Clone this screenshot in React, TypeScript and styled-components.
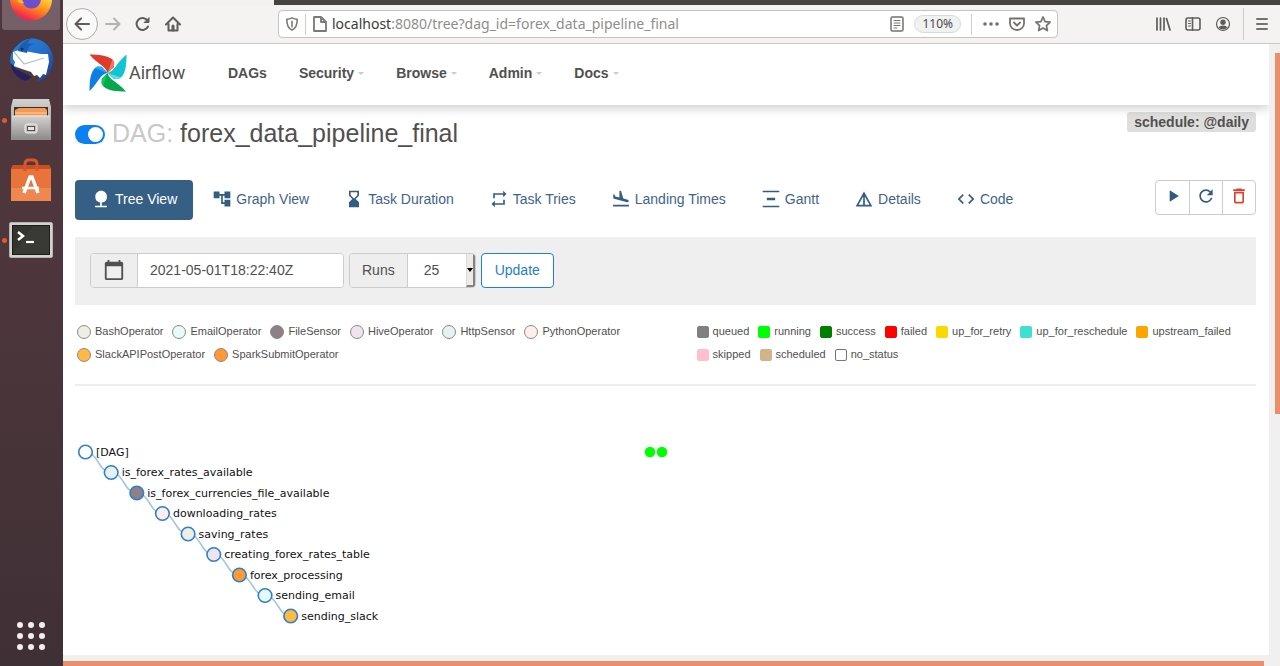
import React from 'react';
import styled, { createGlobalStyle, css } from 'styled-components';
import {
  MdNature, MdAccountTree, MdHourglassBottom, MdRepeat, MdFlightLand, MdVerticalDistribute,
  MdDetails, MdCode, MdPlayArrow, MdRefresh, MdDeleteOutline, MdCalendarToday,
} from 'react-icons/md';

const GlobalStyle = createGlobalStyle`
  *, *::before, *::after { box-sizing: border-box; }
  body {
    margin: 0;
    color: #51504f;
    font-family: "Liberation Sans", Arial, sans-serif;
    font-size: 14px;
    line-height: 20px;
  }
  button, input, select { font: inherit; color: inherit; margin: 0; }
  a { text-decoration: none; }
`;

const Desktop = styled.div`
  display: grid;
  grid-template-columns: 63px minmax(0, 1fr);
  min-height: 100vh;
`;

/* Launcher */

const Dock = styled.nav`
  display: flex;
  flex-direction: column;
  align-items: stretch;
  padding-right: 1px;
  background: linear-gradient(#50373e, #4c363b 45%, #3f3035);
`;

const DockButton = styled.button<{ $running?: boolean; $active?: boolean }>`
  display: flex;
  justify-content: center;
  align-items: center;
  position: relative;
  height: 60px;
  padding: 0;
  border: 0;
  background: none;
  ${p => p.$active && css`
    height: 30px;
    margin: 0 2px;
    align-items: flex-start;
    border-radius: 0 0 3px 3px;
    background: #75606a;
  `}
  ${p => p.$running && css`
    &::before {
      content: '';
      position: absolute;
      left: 2px;
      top: 50%;
      width: 5px;
      height: 5px;
      margin-top: -2px;
      border-radius: 50%;
      background: #e2582d;
    }
  `}
`;

const DockSpacer = styled.div`
  flex: 1;
`;

/* Browser chrome */

const Browser = styled.div`
  display: flex;
  flex-direction: column;
  min-width: 0;
  background: #f2f1ef;
`;

const TabStrip = styled.div`
  display: flex;
  height: 5px;
  background: #464440;
`;

const ActiveTab = styled.div`
  width: 211px;
  background: #f2f1f0;
`;

const BrowserBar = styled.div`
  display: flex;
  align-items: center;
  height: 39px;
  padding: 0 5px 0 3px;
  border-bottom: 1px solid #cbc9c7;
  background: #f4f3f2;
`;

const ToolButton = styled.button<{ $round?: boolean }>`
  display: flex;
  flex: none;
  align-items: center;
  justify-content: center;
  width: 30px;
  height: 30px;
  padding: 0;
  border: 0;
  border-radius: 50%;
  background: none;
  color: #5f5d59;
  &:disabled { color: #b4b2b0; }
  ${p => p.$round && css`
    width: 32px;
    height: 32px;
    border: 1px solid #aeaca9;
    background: #fbfafa;
  `}
`;

const AddressBar = styled.div`
  display: flex;
  align-items: center;
  flex: 1;
  min-width: 0;
  height: 28px;
  margin: 0 90px;
  padding: 0 1px 0 6px;
  border: 1px solid #c6c4c2;
  border-radius: 4px;
  background: #fff;
  color: #7b7976;
`;

const Address = styled.div`
  flex: 1;
  min-width: 0;
  padding-left: 4px;
  overflow: hidden;
  white-space: nowrap;
  font-family: "Noto Sans", sans-serif;
  color: #8f8e8c;
  b { font-weight: 400; color: #3a3938; }
`;

const BarDivider = styled.span<{ $tall?: boolean }>`
  flex: none;
  width: 1px;
  height: ${p => (p.$tall ? 32 : 21)}px;
  margin: 0 ${p => (p.$tall ? 5 : 6)}px;
  background: #cfcdcb;
`;

const Zoom = styled.button`
  height: 18px;
  margin: 0 4px;
  padding: 0 7px;
  border: 1px solid #d8dadb;
  border-radius: 9px;
  background: #f0f2f2;
  font-family: "Noto Sans", sans-serif;
  font-size: 12px;
  line-height: 16px;
  color: #4a4948;
`;

const SmallButton = styled.button`
  display: flex;
  flex: none;
  align-items: center;
  justify-content: center;
  width: 26px;
  height: 26px;
  padding: 0;
  border: 0;
  background: none;
  color: #74726f;
`;

const Viewport = styled.div`
  display: flex;
  flex: 1;
`;

const Page = styled.div`
  flex: 1;
  min-width: 0;
  background: #fff;
`;

const VerticalTrack = styled.div`
  display: flex;
  justify-content: flex-end;
  width: 11px;
  padding-top: 9px;
  background: #f2f0ee;
`;

const VerticalThumb = styled.div`
  width: 5px;
  height: 60%;
  background: #ea8e6b;
`;

const HorizontalTrack = styled.div`
  display: flex;
  align-items: flex-end;
  height: 11px;
  padding-right: 16px;
  background: #f2f0ee;
`;

const HorizontalThumb = styled.div`
  flex: 1;
  height: 5px;
  background: #ea8e6b;
`;

/* Airflow page */

const Navbar = styled.header`
  display: flex;
  align-items: center;
  height: 61px;
  padding: 0 0 3px 26px;
  background: #fff;
  box-shadow: 0 3px 10px rgba(0, 0, 0, 0.2);
  clip-path: inset(0 0 -16px 0);
`;

const Brand = styled.a`
  display: flex;
  align-items: center;
  gap: 2px;
  width: 123px;
  color: #51504f;
  font-family: Roboto, sans-serif;
  font-size: 18px;
`;

const NavLink = styled.a`
  display: flex;
  align-items: center;
  gap: 4px;
  padding: 0 16px;
  color: #51504f;
  font-weight: 700;
`;

const Caret = styled.span`
  border: 3px solid transparent;
  border-top-color: #ccc;
  border-bottom: 0;
`;

const Main = styled.main`
  padding: 7px 13px 0 12px;
`;

const TitleRow = styled.div`
  display: flex;
  align-items: flex-start;
  justify-content: space-between;
`;

const Title = styled.h3`
  display: flex;
  align-items: center;
  gap: 7px;
  margin: 6px 0 0;
  font-size: 25px;
  font-weight: 400;
  line-height: 30px;
`;

const Muted = styled.span`
  color: #c9c8c7;
`;

const Toggle = styled.input`
  appearance: none;
  display: flex;
  width: 30px;
  height: 19px;
  margin: 3px 0 0;
  padding: 2px;
  border-radius: 10px;
  background: #0c7ff2;
  &::before {
    content: '';
    width: 15px;
    height: 15px;
    margin-left: auto;
    border-radius: 50%;
    background: #fff;
  }
`;

const Schedule = styled.a`
  padding: 0 7px;
  border-radius: 3px;
  background: #dededd;
  color: #51504f;
  font-weight: 700;
`;

const ViewRow = styled.div`
  display: flex;
  align-items: flex-start;
  justify-content: space-between;
  margin-top: 32px;
`;

const Views = styled.nav`
  display: flex;
  gap: 3px;
`;

const ViewLink = styled.a<{ $active?: boolean }>`
  display: flex;
  align-items: center;
  gap: 4px;
  height: 40px;
  padding: 0 16px 2px;
  border-radius: 4px;
  white-space: nowrap;
  color: ${p => (p.$active ? '#fff' : '#3f648a')};
  background: ${p => (p.$active ? '#355f85' : 'none')};
  svg { width: 20px; height: 20px; color: ${p => (p.$active ? '#fff' : '#345d82')}; }
`;

const Actions = styled.div`
  display: flex;
  border: 1px solid #ccc;
  border-radius: 4px;
`;

const ActionButton = styled.button<{ $danger?: boolean }>`
  display: flex;
  justify-content: center;
  width: 33px;
  height: 33px;
  padding: 5px 0 0;
  border: 0;
  background: none;
  color: ${p => (p.$danger ? '#e0402f' : '#315b80')};
  & + & { border-left: 1px solid #ccc; }
`;

const FilterForm = styled.form`
  display: flex;
  gap: 5px;
  margin-top: 17px;
  padding: 16px 15px 17px;
  background: #efefef;
`;

const InputGroup = styled.div`
  display: flex;
  height: 35px;
  border: 1px solid #ccc;
  border-radius: 4px;
  background: #fff;
  overflow: hidden;
`;

const Addon = styled.label`
  display: flex;
  align-items: center;
  justify-content: center;
  padding: 0 12px 1px;
  border-right: 1px solid #ccc;
  background: #eee;
`;

const DateInput = styled.input`
  width: 205px;
  padding: 0 12px 1px;
  border: 0;
  background: #fff;
`;

const RunsSelect = styled.select`
  appearance: none;
  width: 58px;
  padding: 0 16px 1px;
  border: 0;
  background: #fff;
`;

const SelectArrow = styled.span`
  display: flex;
  align-items: center;
  justify-content: center;
  width: 9px;
  border-right: 2px solid #858380;
  border-bottom: 2px solid #858380;
  border-left: 1px solid #dcdad8;
  background: #ecebea;
  &::before {
    content: '';
    border: 3px solid transparent;
    border-top: 4px solid #000;
    border-bottom: 0;
  }
`;

const UpdateButton = styled.button`
  height: 35px;
  padding: 0 13px 1px;
  border: 1px solid #1f7fd0;
  border-radius: 4px;
  background: #fff;
  color: #1f7fc4;
`;

const Legends = styled.div`
  display: grid;
  grid-template-columns: 10fr 9fr;
  padding: 15px 0 18px;
  border-bottom: 2px solid #eee;
`;

const Legend = styled.ul<{ $dense?: boolean }>`
  display: flex;
  flex-wrap: wrap;
  align-content: flex-start;
  gap: 0 ${p => (p.$dense ? 9 : 9)}px;
  margin: 0;
  padding: ${p => (p.$dense ? '0' : '0 60px 0 2px')};
  list-style: none;
  font-size: 11px;
  line-height: 23px;
`;

const LegendItem = styled.li`
  display: flex;
  align-items: center;
  gap: 4px;
`;

const OperatorSwatch = styled.span<{ $color: string }>`
  width: 14px;
  height: 14px;
  border: 1px solid #8b898a;
  border-radius: 50%;
  background: ${p => p.$color};
`;

const StateSwatch = styled.span<{ $color: string; $outlined?: boolean }>`
  width: 12px;
  height: 12px;
  border: 1px solid ${p => (p.$outlined ? '#777' : p.$color)};
  border-radius: 2px;
  background: ${p => p.$color};
`;

const TreeChart = styled.svg`
  display: block;
  width: 100%;
  height: 268px;
  font-family: "DejaVu Sans", sans-serif;
  font-size: 11px;
`;

/* Icons */

type LineIconProps = { size?: number; width?: number; children: React.ReactNode };

const LineIcon = ({ size = 16, width = 2, children }: LineIconProps) => (
  <svg width={size} height={size} viewBox="0 0 16 16" fill="none" stroke="currentColor"
    strokeWidth={width} strokeLinecap="round" strokeLinejoin="round" aria-hidden="true">
    {children}
  </svg>
);

const FirefoxIcon = () => (
  <svg width="46" height="22" viewBox="0 0 46 22" aria-hidden="true">
    <defs>
      <linearGradient id="fx" x1="1" y1="0" x2="0.1" y2="1">
        <stop offset="0" stopColor="#ffd43c" />
        <stop offset="0.4" stopColor="#ff8a1c" />
        <stop offset="0.8" stopColor="#f4264f" />
      </linearGradient>
    </defs>
    <path d="M2 0c1 12 10 20.500 21 20.500S43.500 12 44 0z" fill="url(#fx)" />
    <path d="M14 0c1 5 4.500 8.500 9.500 8.500S32 5 33 0z" fill="#6b4fd0" />
    <path d="M9 0c1 3 4 4 7 3l-2-3z" fill="#ffb52a" />
  </svg>
);

const ThunderbirdIcon = () => (
  <svg width="46" height="46" viewBox="0 0 46 46" aria-hidden="true">
    <defs>
      <linearGradient id="tb" x1="0" y1="0" x2="1" y2="1">
        <stop offset="0" stopColor="#2387d8" />
        <stop offset="0.5" stopColor="#256fca" />
        <stop offset="1" stopColor="#163a86" />
      </linearGradient>
    </defs>
    <path d="M10 8C16 1 25 0 32 3c9 4 14 13 13 22-1 10-8 18-17 20 4-4 6-7 6-11L4 30C0 22 3 14 10 8z" fill="url(#tb)" />
    <path d="M3 26c0 8 6 16 15 18l6-4-16-8z" fill="#25205e" />
    <path d="M5 15l6-2 22 4 7 0 1 8-3 13-3-1-3 4-3-3-3 1-3-4-9-3-8-3 1-4-2-3z" fill="#fff" />
    <path d="M6 15l10 12 20-6" fill="none" stroke="#b4c0cd" strokeWidth="1.200" />
    <path d="M10 14c1-6 6-11 13-12l-4 4 7 1c-5 1-6 4-7 9z" fill="#1a5fb4" />
    <circle cx="14" cy="12" r="1.500" fill="#0b2f66" />
  </svg>
);

const FilesIcon = () => (
  <svg width="42" height="44" viewBox="0 0 42 44" aria-hidden="true">
    <defs>
      <linearGradient id="fl" x1="0" y1="0" x2="0" y2="1">
        <stop offset="0" stopColor="#d2d1cf" />
        <stop offset="1" stopColor="#8e8d8b" />
      </linearGradient>
    </defs>
    <path d="M3 1h36l2 8v33H1V9z" fill="url(#fl)" />
    <path d="M4 9h34v12H4z" fill="#3b2f28" />
    <path d="M5 12l4-2h26l2 2v9H5z" fill="#f29a58" />
    <path d="M5 15h32M5 18h32" stroke="#ffcfa0" />
    <path d="M2 18h38v23H2z" fill="url(#fl)" />
    <path d="M2 18h38" stroke="#e8e7e5" />
    <rect x="15" y="26" width="12" height="9" rx="2" fill="#c3c2c0" stroke="#f1f0ef" />
    <rect x="17.500" y="28.500" width="7" height="4" fill="#e4e3e1" stroke="#55534f" />
  </svg>
);

const SoftwareIcon = () => (
  <svg width="42" height="44" viewBox="0 0 42 44" aria-hidden="true">
    <path d="M3 7h36l2 4v32H1V11z" fill="#e8743b" />
    <path d="M3 7h36l2 4H1z" fill="#c9501f" />
    <path d="M1 30h40v13H1z" fill="#ee8850" />
    <path d="M15 13V6q0-4 4-4h4q4 0 4 4v7" fill="none" stroke="#d9552b" strokeWidth="3" />
    <path d="M14 35l6-16h2l6 16" fill="none" stroke="#fff" strokeWidth="3.500" />
    <path d="M12 30h17" stroke="#fff" strokeWidth="2.500" />
  </svg>
);

const TerminalIcon = () => (
  <svg width="44" height="36" viewBox="0 0 44 36" aria-hidden="true">
    <rect x="0.500" y="0.500" width="43" height="35" rx="1.500" fill="#d3d2d0" stroke="#b5b3b1" />
    <rect x="3.500" y="3.500" width="37" height="29" fill="#33332f" stroke="#1c1c1b" />
    <path d="M4 32L24 4h16v28z" fill="#3e3e3c" opacity="0.600" />
    <path d="M9 10l5 4-5 4" fill="none" stroke="#fff" strokeWidth="2.500" />
    <path d="M17 20h8" stroke="#fff" strokeWidth="2.200" />
  </svg>
);

const AppsIcon = () => (
  <svg width="30" height="30" viewBox="0 0 30 30" fill="#f3efef" aria-hidden="true">
    {[4, 15, 26].map(y => [4, 15, 26].map(x => <circle key={`${x}-${y}`} cx={x} cy={y} r="3" />))}
  </svg>
);

const AirflowLogo = () => (
  <svg width="38" height="38" viewBox="0 0 38 38" aria-hidden="true">
    <path d="M0.500 0.500C9 0.500 19 1.500 23.500 5.500L25 13l-6.500 6C17 12 9 11 0.500 0.500z" fill="#df3a2b" />
    <path d="M23.500 5.500c3.500 3 2.500 7-5 13.500z" fill="#f4765f" />
    <path d="M37.500 0.500C37.500 9 37 19 32 23.500L25 25l-6.500-6C26 17 27 9 37.500 0.500z" fill="#11c4d4" />
    <path d="M32 23.500c-3 3-7 2-13.500-4.500z" fill="#5fdde2" />
    <path d="M37 37.500c-9 0-18-0.500-23-5.500L12.500 25l6-6C20 26 28 27 37 37.500z" fill="#06a84e" />
    <path d="M14 32c-3-3-2.500-7 4.500-13z" fill="#0ccc5e" />
    <path d="M0.500 37C0.500 28 1 19 6 14l6.500-1.500 6 6.500C11 20 10 28 0.500 37z" fill="#0f7de4" />
    <path d="M6 14c3-3 6.500-2.500 12.500 5z" fill="#1fb3ee" />
  </svg>
);

/* Data */

const menus = ['Security', 'Browse', 'Admin', 'Docs'];

const views = [
  { label: 'Tree View', Icon: MdNature, active: true },
  { label: 'Graph View', Icon: MdAccountTree },
  { label: 'Task Duration', Icon: MdHourglassBottom },
  { label: 'Task Tries', Icon: MdRepeat },
  { label: 'Landing Times', Icon: MdFlightLand },
  { label: 'Gantt', Icon: MdVerticalDistribute },
  { label: 'Details', Icon: MdDetails },
  { label: 'Code', Icon: MdCode },
];

const operators: [string, string][] = [
  ['BashOperator', '#f0ede4'],
  ['EmailOperator', '#e6faf9'],
  ['FileSensor', '#8f7f86'],
  ['HiveOperator', '#f0e4ec'],
  ['HttpSensor', '#e6f1f2'],
  ['PythonOperator', '#ffefeb'],
  ['SlackAPIPostOperator', '#ffba44'],
  ['SparkSubmitOperator', '#ff9933'],
];

const states: [string, string][] = [
  ['queued', '#808080'],
  ['running', '#00ff00'],
  ['success', '#008000'],
  ['failed', '#ff0000'],
  ['up_for_retry', '#ffd700'],
  ['up_for_reschedule', '#40e0d0'],
  ['upstream_failed', '#ffa500'],
  ['skipped', '#ffc0cb'],
  ['scheduled', '#d2b48c'],
  ['no_status', '#ffffff'],
];

const tasks: [string, string][] = [
  ['[DAG]', '#ffffff'],
  ['is_forex_rates_available', '#e6f1f2'],
  ['is_forex_currencies_file_available', '#8f7f86'],
  ['downloading_rates', '#ffefeb'],
  ['saving_rates', '#f0ede4'],
  ['creating_forex_rates_table', '#f0e4ec'],
  ['forex_processing', '#ff9933'],
  ['sending_email', '#e6faf9'],
  ['sending_slack', '#ffba44'],
];

const nodeX = (i: number) => 10.5 + i * 25.65;
const nodeY = (i: number) => 66 + i * 20.5;

const TaskTree = () => (
  <TreeChart role="img" aria-label="DAG task tree">
    {tasks.slice(1).map(([name], i) => {
      const mid = (nodeX(i) + nodeX(i + 1)) / 2;
      return (
        <path
          key={name}
          d={`M${nodeX(i)} ${nodeY(i)}C${mid} ${nodeY(i)} ${mid} ${nodeY(i + 1)} ${nodeX(i + 1)} ${nodeY(i + 1)}`}
          fill="none"
          stroke="#9fc3e0"
          strokeWidth="1.500"
        />
      );
    })}
    {tasks.map(([name, color], i) => (
      <g key={name}>
        <circle cx={nodeX(i)} cy={nodeY(i)} r="6.800" fill={color} stroke="#2d80cc" strokeWidth="1.600" />
        <text x={nodeX(i) + 10.5} y={nodeY(i) + 3.5} fill="#111">{name}</text>
      </g>
    ))}
    <circle cx="575" cy="66" r="5.300" fill="#00ff00" />
    <circle cx="587" cy="66" r="5.300" fill="#00ff00" />
  </TreeChart>
);

export default function App() {
  return (
    <Desktop>
      <GlobalStyle />
      <Dock aria-label="Launcher">
        <DockButton $active aria-label="Firefox"><FirefoxIcon /></DockButton>
        <DockButton aria-label="Thunderbird"><ThunderbirdIcon /></DockButton>
        <DockButton $running aria-label="Files"><FilesIcon /></DockButton>
        <DockButton aria-label="Software"><SoftwareIcon /></DockButton>
        <DockButton $running aria-label="Terminal"><TerminalIcon /></DockButton>
        <DockSpacer />
        <DockButton aria-label="Show applications"><AppsIcon /></DockButton>
      </Dock>
      <Browser>
        <TabStrip><ActiveTab /></TabStrip>
        <BrowserBar>
          <ToolButton $round aria-label="Back">
            <LineIcon><path d="M15 8H2M7 2.500L1.500 8 7 13.500" /></LineIcon>
          </ToolButton>
          <ToolButton aria-label="Forward" disabled>
            <LineIcon><path d="M1 8h13M9 2.500L14.500 8 9 13.500" /></LineIcon>
          </ToolButton>
          <ToolButton aria-label="Reload">
            <LineIcon><path d="M13 10.500A6 6 0 1 1 12.500 4.500" /><path d="M14 2v4.500H9.500z" fill="currentColor" strokeWidth="1" /></LineIcon>
          </ToolButton>
          <ToolButton aria-label="Home">
            <LineIcon><path d="M1 8.500L8 1.500l7 7M3.500 8v6.500h9V8" /><path d="M8 14v-4" strokeWidth="3" /></LineIcon>
          </ToolButton>
          <AddressBar>
            <LineIcon size={14} width={1.8}><path d="M8 1c2 1.200 4 1.500 6 1.500C14 9 12.500 13 8 15 3.500 13 2 9 2 2.500 4 2.500 6 2.200 8 1z" /><path d="M8 5v6" /></LineIcon>
            <BarDivider />
            <LineIcon width={1.8}><path d="M2 1h7l5 5v9H2zM9 1v5h5" /></LineIcon>
            <Address><b>localhost</b>:8080/tree?dag_id=forex_data_pipeline_final</Address>
            <SmallButton aria-label="Reader view">
              <LineIcon width={1.5}><rect x="2" y="1" width="12" height="14" rx="1.500" /><path d="M5 4.500h6M5 7h6M5 9.500h6M5 12h3" strokeWidth="1" /></LineIcon>
            </SmallButton>
            <Zoom>110%</Zoom>
            <BarDivider />
            <SmallButton aria-label="Page actions">
              <LineIcon><g fill="currentColor" stroke="none"><circle cx="2" cy="8" r="1.800" /><circle cx="8" cy="8" r="1.800" /><circle cx="14" cy="8" r="1.800" /></g></LineIcon>
            </SmallButton>
            <SmallButton aria-label="Save to Pocket">
              <LineIcon width={1.8}><path d="M1 2.500h14V7.500a7 6.500 0 0 1-14 0z" /><path d="M5 6.500l3 3 3-3" /></LineIcon>
            </SmallButton>
            <SmallButton aria-label="Bookmark">
              <LineIcon width={1.7}><path d="M8 1l2.100 4.600 5 .6-3.700 3.400 1 5L8 12.100 3.600 14.600l1-5L.9 6.200l5-.6z" /></LineIcon>
            </SmallButton>
          </AddressBar>
          <ToolButton aria-label="Library">
            <LineIcon><path d="M2 2v12M5.500 2v12M9 2v12M11.500 2.500l3.500 11.500" strokeWidth="1.700" /></LineIcon>
          </ToolButton>
          <ToolButton aria-label="Sidebar">
            <LineIcon width={1.6}><rect x="1" y="2" width="14" height="12" rx="2" /><path d="M7.500 2v12" /><path d="M3.500 5h2M3.500 7.500h2M3.500 10h2" strokeWidth="1" /></LineIcon>
          </ToolButton>
          <ToolButton aria-label="Account">
            <LineIcon width={1.2}><circle cx="8" cy="8" r="6.500" /><g fill="currentColor" stroke="none"><circle cx="8" cy="6.300" r="2.700" /><path d="M3.500 11.500q1-2 4.500-2t4.500 2Q10.500 13.500 8 13.500t-4.500-2z" /></g></LineIcon>
          </ToolButton>
          <BarDivider $tall />
          <SmallButton aria-label="Menu">
            <LineIcon><path d="M3 3h10M3 8h10M3 13h10" /></LineIcon>
          </SmallButton>
        </BrowserBar>
        <Viewport>
          <Page>
            <Navbar>
              <Brand href="#"><AirflowLogo />Airflow</Brand>
              <NavLink href="#">DAGs</NavLink>
              {menus.map(name => <NavLink key={name} href="#">{name}<Caret /></NavLink>)}
            </Navbar>
            <Main>
              <TitleRow>
                <Title>
                  <Toggle type="checkbox" defaultChecked aria-label="Pause or unpause DAG" />
                  <span><Muted>DAG:</Muted> forex_data_pipeline_final</span>
                </Title>
                <Schedule href="#">schedule: @daily</Schedule>
              </TitleRow>
              <ViewRow>
                <Views>
                  {views.map(({ label, Icon, active }) => (
                    <ViewLink key={label} href="#" $active={active}><Icon />{label}</ViewLink>
                  ))}
                </Views>
                <Actions>
                  <ActionButton aria-label="Trigger DAG"><MdPlayArrow size={20} /></ActionButton>
                  <ActionButton aria-label="Refresh"><MdRefresh size={20} /></ActionButton>
                  <ActionButton aria-label="Delete DAG" $danger><MdDeleteOutline size={20} /></ActionButton>
                </Actions>
              </ViewRow>
              <FilterForm onSubmit={e => e.preventDefault()}>
                <InputGroup>
                  <Addon htmlFor="base-date" aria-label="Base date"><MdCalendarToday size={22} /></Addon>
                  <DateInput id="base-date" type="text" defaultValue="2021-05-01T18:22:40Z" />
                </InputGroup>
                <InputGroup>
                  <Addon htmlFor="runs">Runs</Addon>
                  <RunsSelect id="runs" defaultValue="25">
                    <option>5</option>
                    <option>25</option>
                    <option>50</option>
                    <option>100</option>
                    <option>365</option>
                  </RunsSelect>
                  <SelectArrow />
                </InputGroup>
                <UpdateButton type="submit">Update</UpdateButton>
              </FilterForm>
              <Legends>
                <Legend>
                  {operators.map(([name, color]) => (
                    <LegendItem key={name}><OperatorSwatch $color={color} />{name}</LegendItem>
                  ))}
                </Legend>
                <Legend $dense>
                  {states.map(([name, color]) => (
                    <LegendItem key={name}><StateSwatch $color={color} $outlined={name === 'no_status'} />{name}</LegendItem>
                  ))}
                </Legend>
              </Legends>
              <TaskTree />
            </Main>
          </Page>
          <VerticalTrack><VerticalThumb /></VerticalTrack>
        </Viewport>
        <HorizontalTrack><HorizontalThumb /></HorizontalTrack>
      </Browser>
    </Desktop>
  );
}
